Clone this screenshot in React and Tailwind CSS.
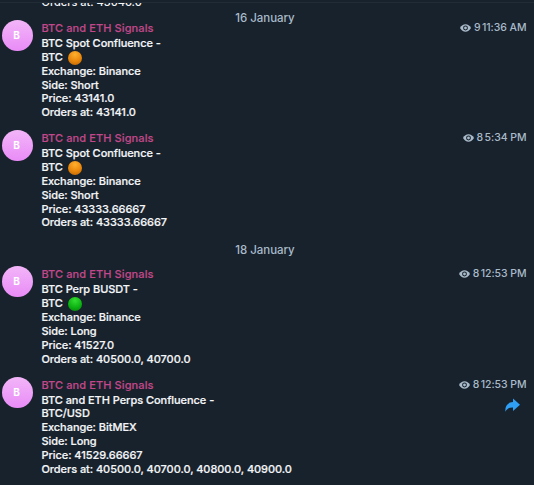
const messages = [
  {
    day: '16 January',
    items: [
      { views: 9, time: '11:36 AM', title: 'BTC Spot Confluence -', pair: 'BTC', dot: 'orange', lines: ['Exchange: Binance', 'Side: Short', 'Price: 43141.0', 'Orders at: 43141.0'] },
      { views: 8, time: '5:34 PM', title: 'BTC Spot Confluence -', pair: 'BTC', dot: 'orange', lines: ['Exchange: Binance', 'Side: Short', 'Price: 43333.66667', 'Orders at: 43333.66667'] },
    ],
  },
  {
    day: '18 January',
    items: [
      { views: 8, time: '12:53 PM', title: 'BTC Perp BUSDT -', pair: 'BTC', dot: 'green', lines: ['Exchange: Binance', 'Side: Long', 'Price: 41527.0', 'Orders at: 40500.0, 40700.0'] },
      { views: 8, time: '12:53 PM', title: 'BTC and ETH Perps Confluence -', pair: 'BTC/USD', share: true, lines: ['Exchange: BitMEX', 'Side: Long', 'Price: 41529.66667', 'Orders at: 40500.0, 40700.0, 40800.0, 40900.0'] },
    ],
  },
];

const dots = {
  orange: 'bg-[radial-gradient(circle_at_50%_25%,#ffb02e,#e8860c_55%,#b86200)]',
  green: 'bg-[radial-gradient(circle_at_50%_25%,#35dc32,#0cb312_55%,#067d0a)]',
};

function Eye() {
  return (
    <svg viewBox="0 0 12 8" className="h-[8px] w-[11px] shrink-0">
      <path d="M0 4C1.500 1.300 3.600 0 6 0s4.500 1.300 6 4C10.500 6.700 8.400 8 6 8S1.500 6.700 0 4z" fill="#a9bac9" />
      <circle cx="6" cy="4" r="2.1" fill="#a9bac9" stroke="#18222d" strokeWidth="1.1" />
    </svg>
  );
}

function Message({ m }) {
  return (
    <article className="flex h-[110.300px] pl-[2px] pr-[7.500px]">
      <div className="flex size-[31px] shrink-0 items-center justify-center rounded-full bg-linear-to-b from-[#f2b5f8] to-[#e98bf7] pr-[2px] text-[10px] font-bold text-white">
        B
      </div>
      <div className="ml-[8.400px] min-w-0 flex-1 whitespace-nowrap">
        <div className="flex h-[16px] items-center justify-between leading-[16px]">
          <span className="text-[11px] tracking-[0.100px] text-[#c2488a] [-webkit-text-stroke:0.150px_#c2488a]">BTC and ETH Signals</span>
          <span className="flex items-center text-[10.500px] tracking-[-0.050px] text-[#a9bac9]">
            <Eye />
            <span className="ml-[3px]">{m.views}</span>
            <span className="ml-[1.500px]">{m.time}</span>
          </span>
        </div>
        <div className="flex justify-between pt-px">
          <div className="text-[11px] leading-[13.800px] tracking-[-0.050px] text-[#f4f6f8] [-webkit-text-stroke:0.200px_#f4f6f8]">
            <p>{m.title}</p>
            <p className="flex items-center">
              {m.pair}
              {m.dot && <span className={`ml-[5px] size-[14px] rounded-full ${dots[m.dot]}`} />}
            </p>
            {m.lines.map((line) => (
              <p key={line}>{line}</p>
            ))}
          </div>
          {m.share && (
            <svg viewBox="0 0 15 14" preserveAspectRatio="none" className="mr-[6.500px] mt-[4px] h-[14px] w-[15px]">
              <path d="M8 0.500L15 6.800L8 13V9.400C4.500 9.200 2 10.500 0.300 13.800C0 8 2.500 4.500 8 4.100z" fill="#2f9ff5" />
            </svg>
          )}
        </div>
      </div>
    </article>
  );
}

export default function App() {
  return (
    <main className="flex h-[485px] w-[534px] flex-col overflow-hidden bg-[#18222d] font-['Inter','Liberation_Sans',sans-serif] font-medium">
      <div className="h-[3px] shrink-0 border-b border-[#212c37]" />
      <div className="flex h-[5px] shrink-0 items-end overflow-hidden pl-[41.500px] text-[11px] leading-[13.800px] text-[#f4f6f8]">
        <span className="-mb-[2px]">Orders at: 43046.0</span>
      </div>
      {messages.map((group, i) => (
        <section key={group.day} className="shrink-0">
          <h2 className={`flex items-center justify-center pr-[4px] text-[11.500px] leading-[16px] tracking-[-0.050px] text-[#a9bac9] ${i === 0 ? 'h-[12px] pt-[7px]' : 'h-[25.800px] pb-[7px]'}`}>
            {group.day}
          </h2>
          {group.items.map((m) => (
            <Message key={m.title + m.lines[2]} m={m} />
          ))}
        </section>
      ))}
    </main>
  );
}
